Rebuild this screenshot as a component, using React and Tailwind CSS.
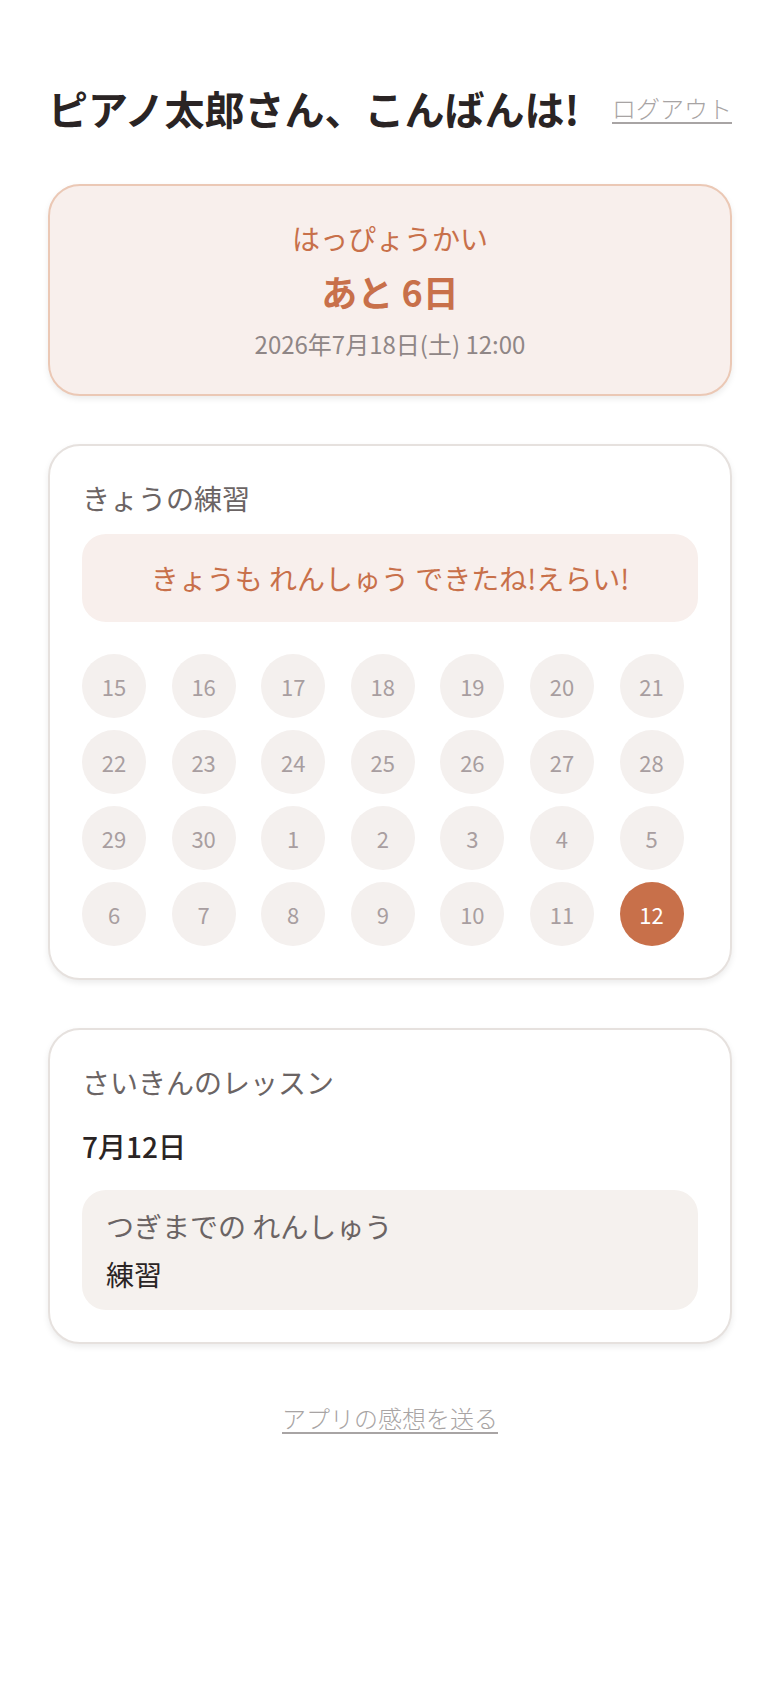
import React from "react";

const days = [15,16,17,18,19,20,21,22,23,24,25,26,27,28,29,30,1,2,3,4,5,6,7,8,9,10,11,12];

export default function App() {
  return (
    <div className="min-h-[1688px] bg-white px-12 pt-20 pb-20" style={{ fontFamily: '"Noto Sans CJK JP", "Noto Sans", sans-serif' }}>
      <div className="flex items-center justify-between">
        <h1 className="text-[40px] font-bold leading-[56px] text-[#2a2424]">ピアノ太郎さん、こんばんは!</h1>
        <a href="#" className="text-[24px] font-light leading-[32px] text-[#a8a4a4] underline underline-offset-4 decoration-2">ログアウト</a>
      </div>

      <div className="mt-12 rounded-[32px] border-2 border-[#ebc8b5] bg-[#f8efec] py-8 text-center shadow-[0_3px_6px_rgba(0,0,0,0.08)]">
        <div className="text-[28px] leading-[40px] text-[#c8704a]">はっぴょうかい</div>
        <div className="mt-3 text-[36px] font-bold leading-[42px] text-[#c8704a]">あと 6日</div>
        <div className="mt-[14px] text-[24px] leading-[36px] text-[#8f8686]">2026年7月18日(土) 12:00</div>
      </div>

      <div className="mt-12 rounded-[32px] border-2 border-[#e6e1de] bg-white p-8 shadow-[0_3px_6px_rgba(0,0,0,0.08)]">
        <div className="text-[28px] leading-[40px] text-[#6b6464]">きょうの練習</div>
        <div className="mt-4 rounded-[24px] bg-[#f8efec] py-6 text-center text-[28px] leading-[40px] text-[#c8704a]">
          きょうも れんしゅう できたね!えらい!
        </div>
        <div className="mt-8 grid grid-cols-[repeat(7,64px)] gap-x-[25.6px] gap-y-3">
          {days.map((d, i) => (
            <div
              key={i}
              className={
                i === days.length - 1
                  ? "flex h-16 w-16 items-center justify-center rounded-full bg-[#c8704a] text-[22px] text-white"
                  : "flex h-16 w-16 items-center justify-center rounded-full bg-[#f4f0ee] text-[22px] text-[#a89ea0]"
              }
            >
              {d}
            </div>
          ))}
        </div>
      </div>

      <div className="mt-12 rounded-[32px] border-2 border-[#e6e1de] bg-white p-8 shadow-[0_3px_6px_rgba(0,0,0,0.08)]">
        <div className="text-[28px] leading-[40px] text-[#6b6464]">さいきんのレッスン</div>
        <div className="mt-6 text-[28px] font-medium leading-[40px] text-[#2a2424]">7月12日</div>
        <div className="mt-6 rounded-[24px] bg-[#f5f1ee] px-6 py-4">
          <div className="text-[28px] leading-[40px] text-[#6b6464]">つぎまでの れんしゅう</div>
          <div className="mt-2 text-[28px] leading-[40px] text-[#2a2424]">練習</div>
        </div>
      </div>

      <div className="mt-[58px] text-center">
        <a href="#" className="text-[24px] font-light leading-[32px] text-[#a8a4a4] underline underline-offset-4 decoration-2">アプリの感想を送る</a>
      </div>
    </div>
  );
}
